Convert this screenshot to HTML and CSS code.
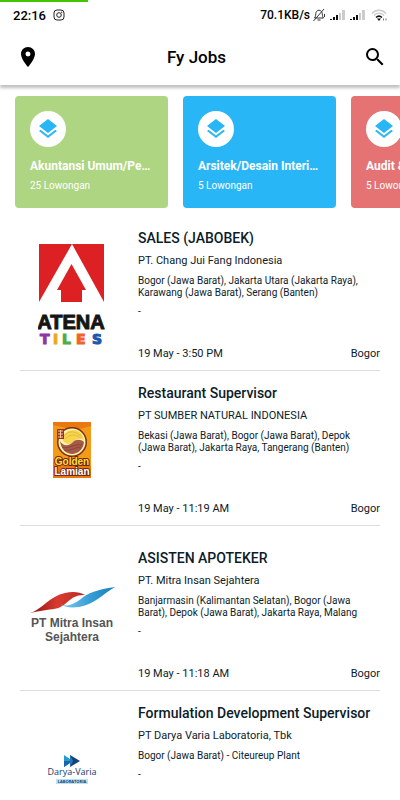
FILE: index.html
```html
<!DOCTYPE html>
<html lang="id">

<head>
  <meta charset="utf-8">
  <meta name="viewport" content="width=device-width, initial-scale=1.0" />
  <title>Fy Jobs</title>
  <link rel="stylesheet" href="styles.css">
</head>

<body>
  <div class="progress"></div>
  <header class="header">
    <div class="status">
      <span class="clock">22:16</span>
      <svg width="12" height="12" viewBox="0 0 12 12" fill="none" stroke="#222">
        <rect x="1" y="1" width="10" height="10" rx="3" />
        <circle cx="6" cy="6" r="2.3" />
        <circle cx="8.8" cy="3.2" r=".3" />
      </svg>
      <span class="speed">70.1KB/s</span>
      <svg width="14" height="14" viewBox="0 0 14 14" fill="none" stroke="#333">
        <path d="M2.500 10h9C10 8.500 10.500 6 10 4.500 9 1.500 5 1.500 4 4.500 3.500 6 4 8.500 2.500 10zM5.500 12h3M12 1L1.500 13M12.500 6v3" />
      </svg>
      <svg class="signal" width="16" height="12" viewBox="0 0 16 12">
        <path fill="#111" d="M0 10h2v1H0zM3 8h2v3H3zM6 6h2v5H6z" />
        <path fill="#ccc" d="M9 4h2v7H9zM12 1h3v10h-3z" />
      </svg>
      <svg class="signal" width="16" height="12" viewBox="0 0 16 12">
        <path fill="#111" d="M0 10h2v1H0zM3 8h2v3H3zM6 6h2v5H6z" />
        <path fill="#ccc" d="M9 4h2v7H9zM12 1h3v10h-3z" />
      </svg>
      <svg class="wifi" width="17" height="13" viewBox="0 0 17 13" fill="none">
        <path stroke="#ccc" stroke-width="1.500" d="M1 4.500C5 .3 11 .3 15 4.500M3 6.500c3-3 7-3 10 0" />
        <path stroke="#111" stroke-width="1.500" d="M5 8.500c2-1.800 4-1.800 6 0" />
        <path fill="#111" d="M6 9.500h4L8 12z" />
        <path stroke="#777" d="M12.500 11.500v-2M15 9.500v2" />
      </svg>
    </div>
    <div class="toolbar">
      <button class="icon-button" aria-label="Lokasi">
        <svg width="24" height="24" viewBox="0 0 24 24">
          <path d="M12 2C8.130 2 5 5.130 5 9c0 5.250 7 13 7 13s7-7.750 7-13c0-3.870-3.130-7-7-7zm0 9.500a2.500 2.500 0 0 1 0-5 2.500 2.500 0 0 1 0 5z" />
        </svg>
      </button>
      <h1>Fy Jobs</h1>
      <button class="icon-button" aria-label="Cari">
        <svg width="24" height="24" viewBox="0 0 24 24">
          <path d="M15.500 14h-.79l-.28-.27A6.471 6.471 0 0 0 16 9.500 6.500 6.500 0 1 0 9.500 16c1.610 0 3.090-.59 4.230-1.570l.27.28v.79l5 4.990L20.490 19l-4.990-5zm-6 0C7.010 14 5 11.990 5 9.500S7.010 5 9.500 5 14 7.010 14 9.500 11.990 14 9.500 14z" />
        </svg>
      </button>
    </div>
  </header>

  <main>
    <nav class="categories">
      <a href="#akuntansi" class="category green">
        <span class="category-icon">
          <svg width="24" height="24" viewBox="0 0 24 24">
            <path d="M11.990 18.540l-7.370-5.730L3 14.070l9 7 9-7-1.630-1.270-7.380 5.740zM12 16l7.360-5.730L21 9l-9-7-9 7 1.630 1.270L12 16z" />
          </svg>
        </span>
        <strong>Akuntansi Umum/Pembiayaan</strong>
        <small>25 Lowongan</small>
      </a>
      <a href="#arsitek" class="category blue">
        <span class="category-icon">
          <svg width="24" height="24" viewBox="0 0 24 24">
            <path d="M11.990 18.540l-7.370-5.730L3 14.070l9 7 9-7-1.630-1.270-7.380 5.740zM12 16l7.360-5.730L21 9l-9-7-9 7 1.630 1.270L12 16z" />
          </svg>
        </span>
        <strong>Arsitek/Desain Interior Rumah</strong>
        <small>5 Lowongan</small>
      </a>
      <a href="#audit" class="category red">
        <span class="category-icon">
          <svg width="24" height="24" viewBox="0 0 24 24">
            <path d="M11.990 18.540l-7.370-5.730L3 14.070l9 7 9-7-1.630-1.270-7.380 5.740zM12 16l7.360-5.730L21 9l-9-7-9 7 1.630 1.270L12 16z" />
          </svg>
        </span>
        <strong>Audit &amp; Pajak</strong>
        <small>5 Lowongan</small>
      </a>
    </nav>

    <section class="jobs">
      <article class="job">
        <div class="logo">
          <svg width="68" height="104" viewBox="0 0 68 104">
            <path fill="#dc2023" d="M1 1h65v58L34 1 1 59z" />
            <path fill="#dc2023" d="M33.500 21L48 47h-4v12H23V47h-4z" />
            <text class="atena" x="33" y="86" text-anchor="middle">ATENA</text>
            <text class="tiles" y="101"><tspan x="2" fill="#8d35a5" stroke="#8d35a5">T</tspan><tspan x="15" fill="#f0a51c" stroke="#f0a51c">I</tspan><tspan x="24" fill="#54ab3f" stroke="#54ab3f">L</tspan><tspan x="38" fill="#ee6330" stroke="#ee6330">E</tspan><tspan x="54" fill="#1c56ad" stroke="#1c56ad">S</tspan></text>
          </svg>
        </div>
        <div class="info">
          <h2>SALES (JABOBEK)</h2>
          <p class="company">PT. Chang Jui Fang Indonesia</p>
          <p class="places">Bogor (Jawa Barat), Jakarta Utara (Jakarta Raya), Karawang (Jawa Barat), Serang (Banten)</p>
          <p class="salary">-</p>
          <div class="meta"><time>19 May - 3:50 PM</time><span>Bogor</span></div>
        </div>
      </article>

      <article class="job">
        <div class="logo">
          <svg width="38" height="56" viewBox="0 0 38 56">
            <path fill="#f59a16" d="M0 0h38v56H0z" />
            <path fill="#e97810" d="M0 0h38v4L22 8 0 3zM0 56V40l12-4 26 8v12z" />
            <circle cx="19" cy="20" r="15" fill="#74301a" />
            <circle cx="19" cy="20" r="13.500" fill="#fff3b0" />
            <path fill="#f7d44d" d="M9 17c3-12 20-12 22 1-5-3-8 0-11 2-4 3-9 2-11-3z" />
            <path fill="#a55a49" d="M7 19c4 7 10 4 13 1s8-3 11 0c-1 15-22 17-24-1z" />
            <path fill="none" stroke="#d8aa38" stroke-width=".6" d="M11 14c5-6 11-5 17 0M12 17c5-5 10-5 16-1" />
            <path fill="none" stroke="#7b3228" stroke-width=".6" d="M9 25c6 3 12-4 20-2M11 28c7 2 11-4 17-2" />
            <path fill="#993222" d="M4 7h7v10H4z" />
            <path fill="none" stroke="#f4c7a1" d="M5 9h5M5 12h5M5 15h5M7.500 8v8" />
            <text class="golden" x="19" y="43" text-anchor="middle">Golden</text>
            <text class="lamian" x="19" y="53" text-anchor="middle">Lamian</text>
          </svg>
        </div>
        <div class="info">
          <h2>Restaurant Supervisor</h2>
          <p class="company">PT SUMBER NATURAL INDONESIA</p>
          <p class="places">Bekasi (Jawa Barat), Bogor (Jawa Barat), Depok (Jawa Barat), Jakarta Raya, Tangerang (Banten)</p>
          <p class="salary">-</p>
          <div class="meta"><time>19 May - 11:19 AM</time><span>Bogor</span></div>
        </div>
      </article>

      <article class="job tall">
        <div class="logo">
          <svg width="90" height="60" viewBox="0 0 90 60">
            <defs>
              <linearGradient id="red" x2="1"><stop stop-color="#8e1414" /><stop offset=".5" stop-color="#d93a30" /><stop offset="1" stop-color="#b92a25" /></linearGradient>
              <linearGradient id="blue" x2="1"><stop stop-color="#83cdf0" /><stop offset=".5" stop-color="#3ba1d8" /><stop offset="1" stop-color="#1580bb" /></linearGradient>
            </defs>
            <path fill="url(#red)" d="M3 28C14 25 23 11 38 8c8-2 15-1 20 2-16-1-17 12-31 14-8 1-16 2-24 4z" />
            <path fill="url(#blue)" d="M33 19c8 4 16-1 22-6C64 6 75 4 88 2 76 9 66 20 52 22c-9 1-15 0-19-3z" />
            <text class="mitra" x="45" y="42" text-anchor="middle">PT Mitra Insan</text>
            <text class="mitra" x="45" y="56" text-anchor="middle">Sejahtera</text>
          </svg>
        </div>
        <div class="info">
          <h2>ASISTEN APOTEKER</h2>
          <p class="company">PT. Mitra Insan Sejahtera</p>
          <p class="places">Banjarmasin (Kalimantan Selatan), Bogor (Jawa Barat), Depok (Jawa Barat), Jakarta Raya, Malang</p>
          <p class="salary">-</p>
          <div class="meta"><time>19 May - 11:18 AM</time><span>Bogor</span></div>
        </div>
      </article>

      <article class="job">
        <div class="logo">
          <svg width="50" height="32" viewBox="0 0 50 32">
            <path fill="#239bd2" d="M17 1l9 6-9 6z" />
            <path fill="#1b65a5" d="M17 7h9l-9 6z" />
            <path fill="#14427b" d="M23 1l10 6-10 6z" />
            <path fill="#2478b5" d="M23 1l3 6-3 6z" />
            <text class="darya" x="25" y="21" text-anchor="middle">Darya-Varia</text>
            <path fill="#b8e2f3" d="M9 25h32v5H9z" />
            <text class="laboratoria" x="25" y="29" text-anchor="middle">LABORATORIA</text>
          </svg>
        </div>
        <div class="info">
          <h2>Formulation Development Supervisor</h2>
          <p class="company">PT Darya Varia Laboratoria, Tbk</p>
          <p class="places">Bogor (Jawa Barat) - Citeureup Plant</p>
          <p class="salary">-</p>
          <div class="meta"><time>19 May - 11:16 AM</time><span>Bogor</span></div>
        </div>
      </article>
    </section>
  </main>
</body>

</html>
```
FILE: styles.css
```css
* {
  box-sizing: border-box;
}

body {
  margin: 0;
  height: 100vh;
  display: flex;
  flex-direction: column;
  overflow: hidden;
  background: #fff;
  color: #0c1c29;
  font-family: Roboto, sans-serif;
}

h1,
h2,
p {
  margin: 0;
}

svg {
  display: block;
  flex: none;
}

.progress {
  width: 22%;
  height: 2px;
  flex: none;
  background: #43c500;
}

.header {
  flex: none;
  color: #000;
  box-shadow: 0 3px 3px rgba(0, 0, 0, 0.25);
  z-index: 1;
}

.status {
  display: flex;
  align-items: center;
  height: 26px;
  padding: 0 12px 0 13px;
  font-size: 12px;
  font-weight: 500;
}

.clock {
  font-size: 13px;
  margin-right: 7px;
}

.speed {
  margin-left: auto;
  margin-right: 2px;
}

.signal {
  margin-left: 4px;
}

.wifi {
  margin-left: 5px;
}

.toolbar {
  display: flex;
  align-items: center;
  justify-content: space-between;
  height: 57px;
  padding: 0 13px 0 16px;
}

.toolbar h1 {
  padding-right: 10px;
  font-size: 17px;
  font-weight: 500;
}

.icon-button {
  padding: 0;
  border: none;
  background: none;
}

main {
  flex: 1;
  min-height: 0;
  overflow-y: auto;
  scrollbar-width: none;
}

.categories {
  display: flex;
  gap: 15px;
  padding: 11px 15px 8px;
  overflow-x: auto;
  scrollbar-width: none;
}

.category {
  display: flex;
  flex-direction: column;
  flex: none;
  width: 153px;
  height: 112px;
  padding: 15px;
  border-radius: 4px;
  color: #fff;
  text-decoration: none;
}

.green {
  background: #aed581;
}

.blue {
  background: #29b6f6;
}

.red {
  background: #e57373;
}

.category-icon {
  display: flex;
  align-items: center;
  justify-content: center;
  width: 36px;
  height: 36px;
  border-radius: 50%;
  background: #fff;
  fill: #29b6f6;
}

.category strong {
  margin-top: 11px;
  font-size: 12px;
  line-height: 16px;
  font-weight: 700;
  white-space: nowrap;
  overflow: hidden;
  text-overflow: ellipsis;
}

.category small {
  margin-top: 6px;
  font-size: 10px;
  line-height: 12px;
}

.jobs {
  padding: 0 20px;
}

.job {
  display: flex;
  gap: 15px;
  min-height: 155px;
  padding: 12px 0 8px;
  border-bottom: 1px solid #dcdcdc;
}

.tall {
  min-height: 165px;
  padding-top: 22px;
}

.logo {
  display: flex;
  align-items: center;
  justify-content: center;
  flex: none;
  width: 103px;
}

.info {
  display: flex;
  flex-direction: column;
  flex: 1;
  min-width: 0;
}

.info h2 {
  font-size: 14px;
  line-height: 20px;
  font-weight: 500;
  white-space: nowrap;
}

.company {
  margin-top: 5px;
  font-size: 11px;
  line-height: 16px;
}

.places {
  margin-top: 6px;
  padding-right: 12px;
  font-size: 10px;
  line-height: 12px;
}

.salary {
  margin-top: 7px;
  font-size: 10px;
  line-height: 12px;
}

.meta {
  display: flex;
  justify-content: space-between;
  margin-top: auto;
  font-size: 11px;
  line-height: 16px;
}

.atena {
  font: bold 20px "Liberation Sans", sans-serif;
  fill: #151515;
  stroke: #151515;
}

.tiles {
  font: bold 14px "DejaVu Sans", sans-serif;
  stroke-width: 1px;
}

.golden,
.lamian {
  font: bold 10px "Liberation Sans", sans-serif;
  stroke: #712719;
  stroke-width: 2px;
  paint-order: stroke;
}

.golden {
  fill: #ffdf35;
}

.lamian {
  fill: #fff;
}

.mitra {
  font: bold 12px "Liberation Sans", sans-serif;
  fill: #555;
}

.darya {
  font: 9px "Open Sans", sans-serif;
  fill: #173d70;
}

.laboratoria {
  font: bold 4px "Open Sans", sans-serif;
  fill: #173d70;
}
```
